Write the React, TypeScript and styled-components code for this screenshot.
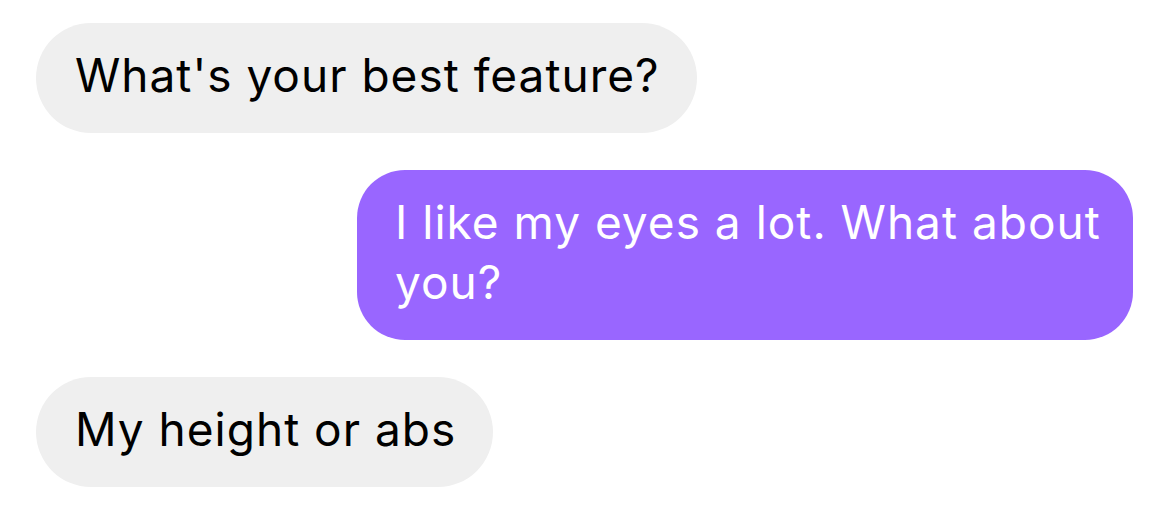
import styled, { createGlobalStyle } from 'styled-components';

const messages = [
  { from: 'them', text: "What's your best feature?" },
  { from: 'me', text: 'I like my eyes a lot. What about you?' },
  { from: 'them', text: 'My height or abs' },
];

const App = () => {
  return (
    <>
      <GlobalStyle />
      <Thread>
        {messages.map((m, i) => (
          <Bubble key={i} $mine={m.from === 'me'}>
            {m.text}
          </Bubble>
        ))}
      </Thread>
    </>
  );
};

const GlobalStyle = createGlobalStyle`
  body {
    margin: 0;
    background: #ffffff;
    font-family: Inter, "Noto Sans", sans-serif;
  }
`;

const Thread = styled.div`
  display: flex;
  flex-direction: column;
  gap: 37px;
  padding: 23px 37px 0 36px;
`;

const Bubble = styled.div<{ $mine: boolean }>`
  align-self: ${(p) => (p.$mine ? 'flex-end' : 'flex-start')};
  max-width: 776px;
  box-sizing: border-box;
  padding: ${(p) => (p.$mine ? '22px 28px 28px 38px' : '22px 37px 28px 39px')};
  border-radius: ${(p) => (p.$mine ? '48px' : '55px')};
  background: ${(p) => (p.$mine ? '#9966ff' : '#efefef')};
  color: ${(p) => (p.$mine ? '#ffffff' : '#000000')};
  font-size: 46px;
  line-height: 60px;
  letter-spacing: 1px;
`;

export default App;
